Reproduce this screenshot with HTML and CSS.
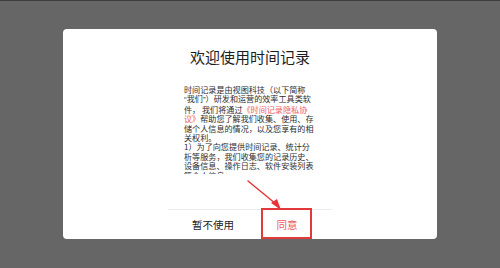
FILE: index.html
```html
<!DOCTYPE html>
<html lang="zh-CN">
<head>
<meta charset="utf-8">
<link rel="stylesheet" href="styles.css">
</head>
<body>
<div class="topline"></div>
<div class="screen">
  <div class="dialog">
    <h1 class="title">欢迎使用时间记录</h1>
    <div class="content">
      <p class="line">时间记录是由视图科技（以下简称</p>
      <p class="line"><span class="q">“</span>我们<span class="q">”</span>）研发和运营的效率工具类软</p>
      <p class="line">件， 我们将通过<span class="link">《时间记录隐私协</span></p>
      <p class="line"><span class="link">议》</span>帮助您了解我们收集、使用、存</p>
      <p class="line">储个人信息的情况，以及您享有的相</p>
      <p class="line">关权利。</p>
      <p class="line">1）为了向您提供时间记录、统计分</p>
      <p class="line">析等服务，我们收集您的记录历史、</p>
      <p class="line">设备信息、操作日志、软件安装列表</p>
      <p class="line">等个人信息；</p>
    </div>
    <div class="footer">
      <div class="btn btn-cancel">暂不使用</div>
      <div class="btn btn-ok">同意</div>
    </div>
    <div class="mark"></div>
    <svg class="arrow" width="40" height="34" viewBox="0 0 40 34">
      <line x1="2" y1="2" x2="30" y2="25" stroke="#e8353a" stroke-width="1.5" stroke-linecap="round"/>
      <polygon points="25,24 35,31 31,20" fill="#e8353a"/>
    </svg>
  </div>
</div>
</body>
</html>
```
FILE: styles.css
```css
html, body {
  margin: 0;
  padding: 0;
}
body {
  width: 500px;
  height: 268px;
  background: #666666;
  overflow: hidden;
  font-family: "Noto Sans CJK SC", "Noto Sans", sans-serif;
  position: relative;
}
.topline {
  position: absolute;
  left: 0;
  top: 0;
  width: 500px;
  height: 1px;
  background: #3e3e3e;
}
.screen {
  height: 268px;
  display: flex;
  align-items: center;
  justify-content: center;
}
.dialog {
  position: relative;
  width: 374px;
  height: 210px;
  background: #ffffff;
  border-radius: 4px;
  display: flex;
  flex-direction: column;
  align-items: center;
  box-sizing: border-box;
}
.title {
  margin: 18px 0 0 0;
  font-size: 15px;
  line-height: 20px;
  font-weight: 400;
  color: #1e1e1e;
}
.content {
  margin-top: 18px;
  width: 132px;
  height: 89px;
  overflow: hidden;
}
.line {
  margin: 0;
  font-size: 8.1px;
  line-height: 9.4px;
  color: #2e2e2e;
  white-space: nowrap;
}
.q {
  font-family: "Liberation Sans", sans-serif;
}
.link {
  color: #ec5a64;
}
.footer {
  margin-top: auto;
  width: 164px;
  height: 29px;
  border-top: 1px solid #ececec;
  display: flex;
  justify-content: center;
}
.btn {
  width: 74px;
  display: flex;
  align-items: center;
  justify-content: center;
  font-size: 10.5px;
}
.btn-cancel {
  color: #222222;
}
.btn-ok {
  color: #ee5a5a;
}
.mark {
  position: absolute;
  left: 198px;
  top: 179px;
  width: 47px;
  height: 27px;
  border: 2px solid #e23a3a;
}
.arrow {
  position: absolute;
  left: 183px;
  top: 150px;
}
```
